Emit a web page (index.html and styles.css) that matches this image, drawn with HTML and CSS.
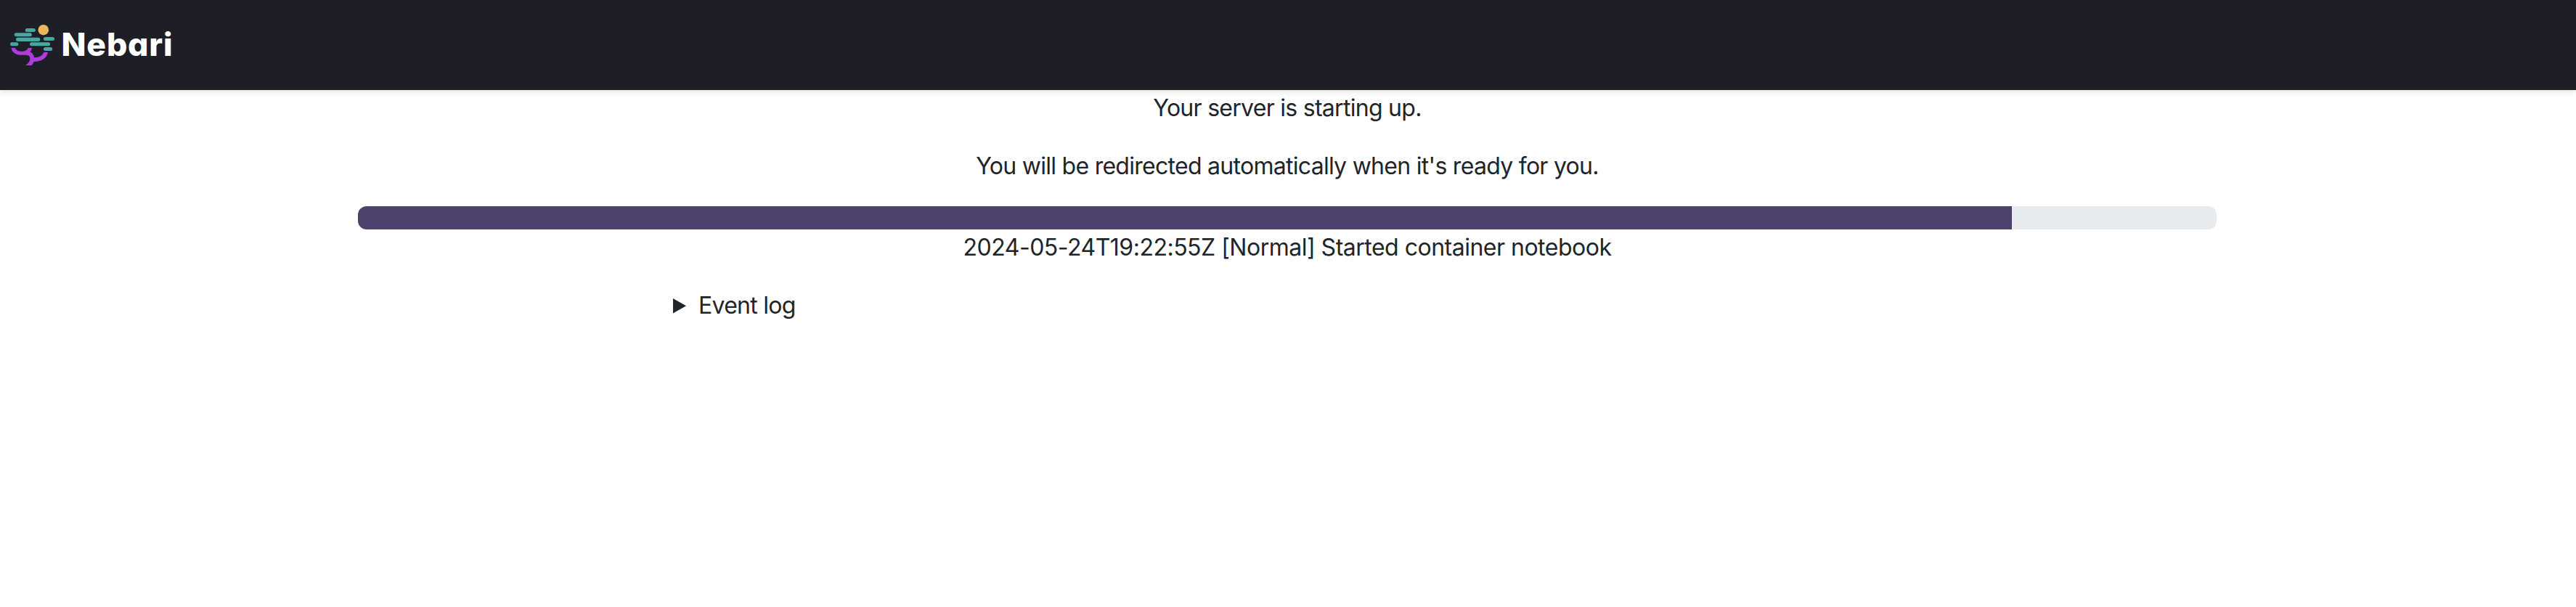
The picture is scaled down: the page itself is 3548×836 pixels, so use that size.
FILE: index.html
```html
<!DOCTYPE html>
<html lang="en">
<head>
<meta charset="utf-8">
<title>Nebari</title>
<link rel="stylesheet" href="styles.css">
</head>
<body>
<header class="navbar">
  <a class="brand">
    <svg class="brand-mark" width="64" height="60" viewBox="12 32 64 60">
      <g fill="#46a8a3">
        <rect x="34.7" y="38.9" width="14.2" height="5" rx="2.5"/>
        <rect x="19.7" y="45.2" width="24.2" height="5" rx="2.5"/>
        <rect x="22" y="51.7" width="33.3" height="5.2" rx="2.5"/>
        <rect x="59.9" y="51" width="15.2" height="5" rx="2.5"/>
        <rect x="14" y="58.2" width="11.3" height="5" rx="2.5"/>
        <rect x="41" y="58.2" width="28.1" height="5" rx="2.5"/>
        <rect x="60" y="65" width="12.2" height="5" rx="2.5"/>
      </g>
      <circle cx="59.8" cy="41.2" r="7.3" fill="#e8b75d"/>
      <path fill="#ae3bdb" d="M15.5 66H21C22 69.5 25.500 70.800 30 70.800C34.500 70.800 37.500 69 38.500 66H44.200C43.700 68.300 42.800 70 41.300 71.200C45 73 46.500 75.600 46.900 79.200C53.500 79 58.600 77.200 60.200 72H66C64.300 80.500 57.500 84.500 46.500 85C46 87 44.800 88.600 43.400 90H35C39.500 87 41.300 84 41.300 80.500C41.300 77.200 38.500 75.800 34.500 75.800H30C21.500 75.800 16.300 72.200 15.500 66Z"/>
    </svg>
    <span class="brand-name">Nebari</span>
  </a>
</header>
<main class="page">
  <p class="line starting">Your server is starting up.</p>
  <p class="line redirect">You will be redirected automatically when it's ready for you.</p>
  <div class="progress"><div class="progress-bar" style="width:89%"></div></div>
  <p class="line message">2024-05-24T19:22:55Z [Normal] Started container notebook</p>
  <div class="event-log">
    <svg width="18" height="21" viewBox="0 0 18 21"><path fill="#212529" d="M0 0L18 10.300L0 20.600Z"/></svg>
    <span class="event-label">Event log</span>
  </div>
</main>
</body>
</html>
```
FILE: styles.css
```css
body {
  margin: 0;
  background: #fff;
  color: #212529;
  font: 32px/48px Inter, "Liberation Sans", sans-serif;
}
.navbar {
  height: 124px;
  background: #1e1e26;
  box-shadow: 0 2px 8px rgba(33, 37, 41, 0.15);
}
.brand {
  display: flex;
  padding: 32px 0 0 12px;
}
.brand-name {
  margin-left: 8.5px;
  color: #fff;
  font-size: 44.5px;
  font-weight: 800;
  line-height: 59px;
  letter-spacing: 0.8px;
  font-feature-settings: "cv11";
}
.page {
  padding: 1px 2px 0 0;
}
.line {
  margin: 0 0 32px;
  text-align: center;
}
.starting { letter-spacing: -0.72px; }
.redirect {
  margin-bottom: 31px;
  letter-spacing: -0.72px;
}
.message {
  padding-top: 1px;
  letter-spacing: -0.5px;
}
.progress {
  width: 2560px;
  height: 32px;
  margin: 0 auto;
  border-radius: 12px;
  background: #e8ebee;
  overflow: hidden;
}
.progress-bar {
  height: 100%;
  background: #4d426d;
}
.event-log {
  display: flex;
  align-items: center;
  padding-left: 927px;
}
.event-label {
  margin-left: 17px;
  letter-spacing: -0.72px;
}
```
